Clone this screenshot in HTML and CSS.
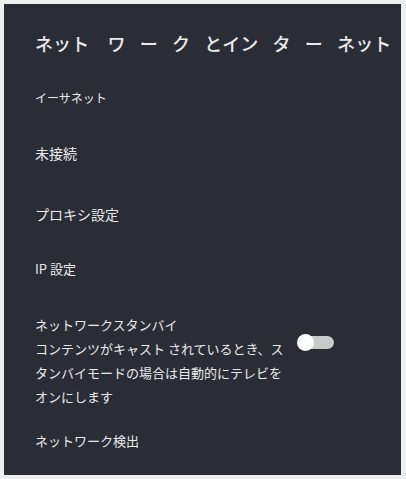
FILE: index.html
```html
<!DOCTYPE html>
<html lang="ja">
<head>
<meta charset="utf-8">
<link rel="stylesheet" href="styles.css">
</head>
<body>
<div class="panel">
  <h1 class="title">ネット　ワ ー ク とイン タ ー ネット</h1>
  <div class="item item-small eth">イーサネット</div>
  <div class="item item-large status">未接続</div>
  <div class="item item-large proxy">プロキシ設定</div>
  <div class="item ip">IP 設定</div>
  <div class="standby">
    <div class="standby-text">
      <div class="standby-title">ネットワークスタンバイ</div>
      <div class="standby-desc">コンテンツがキャスト されているとき、スタンバイモードの場合は自動的にテレビをオンにします</div>
    </div>
    <div class="toggle"><span class="track"></span><span class="knob"></span></div>
  </div>
  <div class="item detect">ネットワーク検出</div>
</div>
</body>
</html>
```

FILE: styles.css
```css
html, body {
  margin: 0;
  padding: 0;
  background: #eeeff0;
}
body {
  width: 406px;
  height: 479px;
  overflow: hidden;
  font-family: "Noto Sans CJK JP", "Noto Sans", sans-serif;
  color: #e9eaec;
}
.panel {
  margin: 4px 5px 0 4px;
  height: 471px;
  background: #2a2d35;
  padding: 27px 0 0 31px;
  box-sizing: border-box;
  overflow: hidden;
}
.title {
  margin: 0;
  font-size: 18px;
  font-weight: 500;
  line-height: 24px;
  white-space: nowrap;
  word-spacing: 10px;
  letter-spacing: 0.1px;
}
.item {
  font-size: 13px;
  line-height: 20px;
}
.item-small { font-size: 12px; }
.item-large { font-size: 14px; }
.eth { margin-top: 33px; }
.status { margin-top: 35px; }
.proxy { margin-top: 41px; }
.ip { margin-top: 35px; }
.standby {
  margin-top: 34px;
  display: flex;
  align-items: flex-start;
}
.standby-text {
  width: 252px;
  font-size: 13px;
  line-height: 24px;
}
.toggle {
  position: relative;
  width: 37px;
  height: 17px;
  margin-top: 21px;
  margin-left: 10px;
}
.track {
  position: absolute;
  left: 8px;
  top: 2px;
  width: 29px;
  height: 13px;
  border-radius: 7px;
  background: #c9cacc;
}
.knob {
  position: absolute;
  left: 0;
  top: 0;
  width: 17px;
  height: 17px;
  border-radius: 50%;
  background: #ffffff;
}
.detect { margin-top: 22px; }
```
